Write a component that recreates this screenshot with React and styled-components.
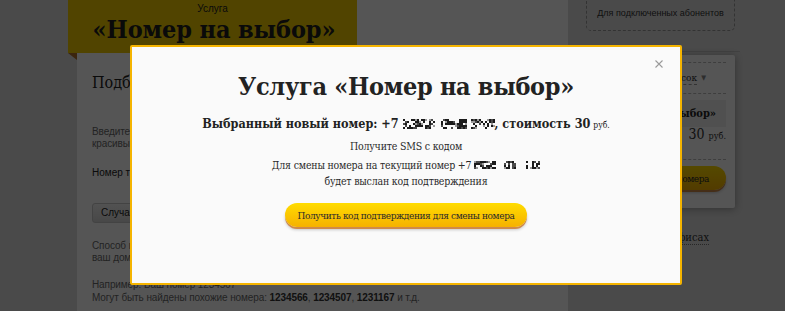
import React from 'react';
import styled, { createGlobalStyle } from 'styled-components';

const Global = createGlobalStyle`
  html, body { margin: 0; padding: 0; }
  body {
    background: #dedede;
    overflow: hidden;
    font-family: "Liberation Sans", Arial, sans-serif;
  }
`;

const SERIF = '"DejaVu Serif Condensed", "DejaVu Serif", serif';

const Page = styled.div`
  display: grid;
  grid-template-columns: 68px 500px 1fr;
  height: 311px;
  overflow: hidden;
`;

const Gutter = styled.div``;

const MainCol = styled.div`
  margin-left: 9px;
  background: #ffffff;
  display: flex;
  flex-direction: column;
`;

const Header = styled.div`
  position: relative;
  margin-left: -9px;
  width: 289px;
  height: 53px;
  background: #f2cd00;
  display: flex;
  flex-direction: column;
  align-items: center;
  padding-top: 2px;
  box-sizing: border-box;
  &::after {
    content: '';
    position: absolute;
    left: 0;
    top: 53px;
    border-style: solid;
    border-width: 0 9px 7px 0;
    border-color: transparent #b0702a transparent transparent;
  }
`;

const HeaderKicker = styled.div`
  font-size: 10px;
  line-height: 13px;
  color: #222;
`;

const HeaderTitle = styled.div`
  font-family: ${SERIF};
  font-weight: bold;
  font-size: 25px;
  letter-spacing: -0.1px;
  line-height: 30px;
  color: #1e1e1e;
  white-space: nowrap;
  padding-left: 3px;
`;

const Content = styled.div`
  padding: 20px 0 0 15px;
  display: flex;
  flex-direction: column;
  white-space: nowrap;
`;

const SectionTitle = styled.div`
  font-family: ${SERIF};
  font-size: 16px;
  line-height: 20px;
  color: #222;
`;

const Muted = styled.div`
  font-size: 10px;
  letter-spacing: -0.1px;
  line-height: ${p => p.$lh || 12}px;
  color: #6a6a6a;
  margin-top: ${p => p.$mt || 0}px;
  b { color: #333; }
`;

const Label = styled.div`
  font-size: 10px;
  line-height: 14px;
  color: #222;
  margin-top: 16px;
`;

const GreyButton = styled.div`
  margin-top: 23px;
  width: 120px;
  height: 20px;
  box-sizing: border-box;
  border-radius: 3px;
  border: 1px solid #c8c8c8;
  background: linear-gradient(#f6f6f6, #d8d8d8);
  font-size: 10px;
  line-height: 18px;
  padding-left: 8px;
  color: #222;
`;

const SideCol = styled.div`
  display: flex;
  flex-direction: column;
  padding-left: 7px;
  width: 160px;
`;

const DashedBox = styled.div`
  margin: -9px 0 0 11px;
  width: 149px;
  height: 40px;
  box-sizing: border-box;
  border: 1px dashed #9a9a9a;
  border-radius: 5px;
  display: flex;
  align-items: flex-end;
  justify-content: center;
  padding-bottom: 11px;
  font-size: 9px;
  line-height: 11px;
  color: #333;
  white-space: nowrap;
`;

const Rule = styled.div`
  margin: 20px -5px 0 -2px;
  height: 1px;
  background: #c4c4c4;
`;

const Card = styled.div`
  margin-top: 3px;
  height: 153px;
  background: #fff;
  box-shadow: 0 1px 8px rgba(0, 0, 0, 0.35);
  border-radius: 2px;
  padding: 7px 9px 0 9px;
  box-sizing: border-box;
  display: flex;
  flex-direction: column;
  align-items: stretch;
`;

const Dotted = styled.div`
  border-top: 1px dashed #bbb;
  margin-top: ${p => p.$mt || 0}px;
`;

const CardRow = styled.div`
  display: flex;
  justify-content: flex-end;
  align-items: center;
  white-space: nowrap;
  height: ${p => p.$h}px;
  padding-right: ${p => p.$pr || 0}px;
  font-family: ${SERIF};
  font-size: 11px;
  color: #333;
`;

const DropLink = styled.span`
  border-bottom: 1px dashed #999;
  line-height: 13px;
  font-size: 10px;
`;

const Caret = styled.span`
  font-size: 7px;
  color: #888;
  margin-left: 4px;
`;

const GreyPanel = styled.div`
  margin-top: 6px;
  height: 27px;
  background: #efefef;
  display: flex;
  justify-content: flex-end;
  align-items: center;
  white-space: nowrap;
  overflow: hidden;
  padding-right: 10px;
  font-family: ${SERIF};
  font-weight: bold;
  font-size: 11px;
  color: #222;
`;

const Price = styled.span`
  font-family: ${SERIF};
  font-size: 14px;
  color: #333;
  small { font-size: 9px; }
`;

const YellowButton = styled.div`
  height: 24px;
  border-radius: 12px;
  background: linear-gradient(#ffdc00, #f6b100);
  box-shadow: 0 2px 0 #cf8a4a, 0 3px 3px rgba(0, 0, 0, 0.2);
  font-family: ${SERIF};
  font-size: 10px;
  letter-spacing: -0.4px;
  white-space: nowrap;
  color: #2a2a2a;
  display: flex;
  align-items: center;
  justify-content: ${p => p.$justify || 'center'};
  padding: 0 ${p => p.$px || 0}px;
  margin-top: ${p => p.$mt || 0}px;
  box-sizing: border-box;
  overflow: hidden;
`;

const OfficeLink = styled.div`
  margin-top: 23px;
  padding-right: 26px;
  text-align: right;
  white-space: nowrap;
  font-family: ${SERIF};
  font-size: 11px;
  color: #333;
  span { border-bottom: 1px dotted #777; }
`;

const Overlay = styled.div`
  position: fixed;
  inset: 0;
  background: rgba(0, 0, 0, 0.667);
`;

const Modal = styled.div`
  position: fixed;
  left: 130px;
  top: 45px;
  width: 552px;
  height: 240px;
  box-sizing: border-box;
  border: 2px solid #f5b400;
  border-radius: 2px;
  background: #fafafa;
  display: flex;
  flex-direction: column;
  align-items: center;
  padding-top: 25px;
  font-family: ${SERIF};
  color: #2a2a2a;
`;

const Close = styled.div`
  position: absolute;
  right: 17px;
  top: 13px;
  width: 8px;
  height: 8px;
  display: flex;
`;

const Title = styled.h1`
  margin: 0;
  font-size: 25px;
  letter-spacing: -0.3px;
  line-height: 30px;
  font-weight: bold;
  color: #222;
  white-space: nowrap;
`;

const Subtitle = styled.div`
  margin-top: 12px;
  font-size: 12.5px;
  line-height: 18px;
  font-weight: bold;
  color: #222;
  display: flex;
  align-items: center;
  white-space: pre;
  small {
    font-size: 8.5px;
    font-weight: normal;
    margin-left: 3px;
    padding-top: 2px;
  }
`;

const Para = styled.div`
  margin-top: ${p => p.$mt}px;
  font-size: 10.5px;
  letter-spacing: -0.2px;
  line-height: 16px;
  text-align: center;
  color: #2a2a2a;
`;

const Line = styled.div`
  display: flex;
  justify-content: center;
  align-items: center;
  white-space: pre;
`;

const ModalButton = styled(YellowButton)`
  width: 242px;
`;

function Mosaic({ width, height, seed = 1, groups }) {
  const cell = 2;
  const rects = [];
  let s = seed * 9301 + 49297;
  const rnd = () => {
    s = (s * 9301 + 49297) % 233280;
    return s / 233280;
  };
  const cols = Math.floor(width / cell);
  const rows = Math.floor(height / cell);
  for (let i = 0; i < cols; i++) {
    const x = i * cell;
    const inGroup = groups.some(([a, b]) => x >= a && x < b);
    if (!inGroup) continue;
    for (let j = 0; j < rows; j++) {
      const r = rnd();
      if (r < 0.62) {
        const shade = r < 0.38 ? '#1a1a1a' : r < 0.52 ? '#4a4a4a' : '#9a9a9a';
        rects.push(
          <rect key={`${i}-${j}`} x={x} y={j * cell} width={cell} height={cell} fill={shade} />
        );
      }
    }
  }
  return (
    <svg width={width} height={height} style={{ display: 'block' }}>
      {rects}
    </svg>
  );
}

export default function App() {
  return (
    <>
      <Global />
      <Page>
        <Gutter />
        <MainCol>
          <Header>
            <HeaderKicker>Услуга</HeaderKicker>
            <HeaderTitle>«Номер на выбор»</HeaderTitle>
          </Header>
          <Content>
            <SectionTitle>Подберите номер</SectionTitle>
            <Muted $mt={33}>Введите желаемые цифры, и мы подберём для вас</Muted>
            <Muted>красивый номер</Muted>
            <Label>Номер телефона</Label>
            <GreyButton>Случайный</GreyButton>
            <Muted $mt={17}>Способ поиска: по совпадению цифр, например</Muted>
            <Muted>ваш домашний номер или дата рождения</Muted>
            <Muted $mt={14} $lh={13}>Например: Ваш номер 1234567</Muted>
            <Muted $lh={13}>
              Могут быть найдены похожие номера: <b>1234566</b>, <b>1234507</b>, <b>1231167</b> и т.д.
            </Muted>
          </Content>
        </MainCol>
        <SideCol>
          <DashedBox>Для подключенных абонентов</DashedBox>
          <Rule />
          <Card>
            <Dotted />
            <CardRow $h={30} $pr={20}>
              <DropLink>Список</DropLink>
              <Caret>▼</Caret>
            </CardRow>
            <Dotted />
            <GreyPanel>Услуга «Номер на выбор»</GreyPanel>
            <CardRow $h={14}>
              <Price>
                30 <small>руб.</small>
              </Price>
            </CardRow>
            <Dotted $mt={18} />
            <YellowButton $justify="flex-end" $px={17} $mt={6}>
              Сменить номера
            </YellowButton>
          </Card>
          <OfficeLink>
            Подключить в <span>офисах</span>
          </OfficeLink>
        </SideCol>
      </Page>
      <Overlay />
      <Modal>
        <Close>
          <svg width="8" height="8" viewBox="0 0 8 8">
            <path d="M0.5 0.5 L7.5 7.5 M7.5 0.5 L0.5 7.5" stroke="#9a9a9a" strokeWidth="1.1" />
          </svg>
        </Close>
        <Title>Услуга «Номер на выбор»</Title>
        <Subtitle>
          {'Выбранный новый номер: +7 '}
          <Mosaic width={92} height={10} seed={3} groups={[[0, 32], [38, 64], [68, 92]]} />
          {', стоимость 30'}
          <small>руб.</small>
        </Subtitle>
        <Para $mt={4}>Получите SMS с кодом</Para>
        <Para $mt={3}>
          <Line>
            {'Для смены номера на текущий номер +7 '}
            <Mosaic width={66} height={8} seed={7} groups={[[0, 22], [30, 42], [52, 66]]} />
          </Line>
          <Line>будет выслан код подтверждения</Line>
        </Para>
        <ModalButton $mt={14}>Получить код подтверждения для смены номера</ModalButton>
      </Modal>
    </>
  );
}
